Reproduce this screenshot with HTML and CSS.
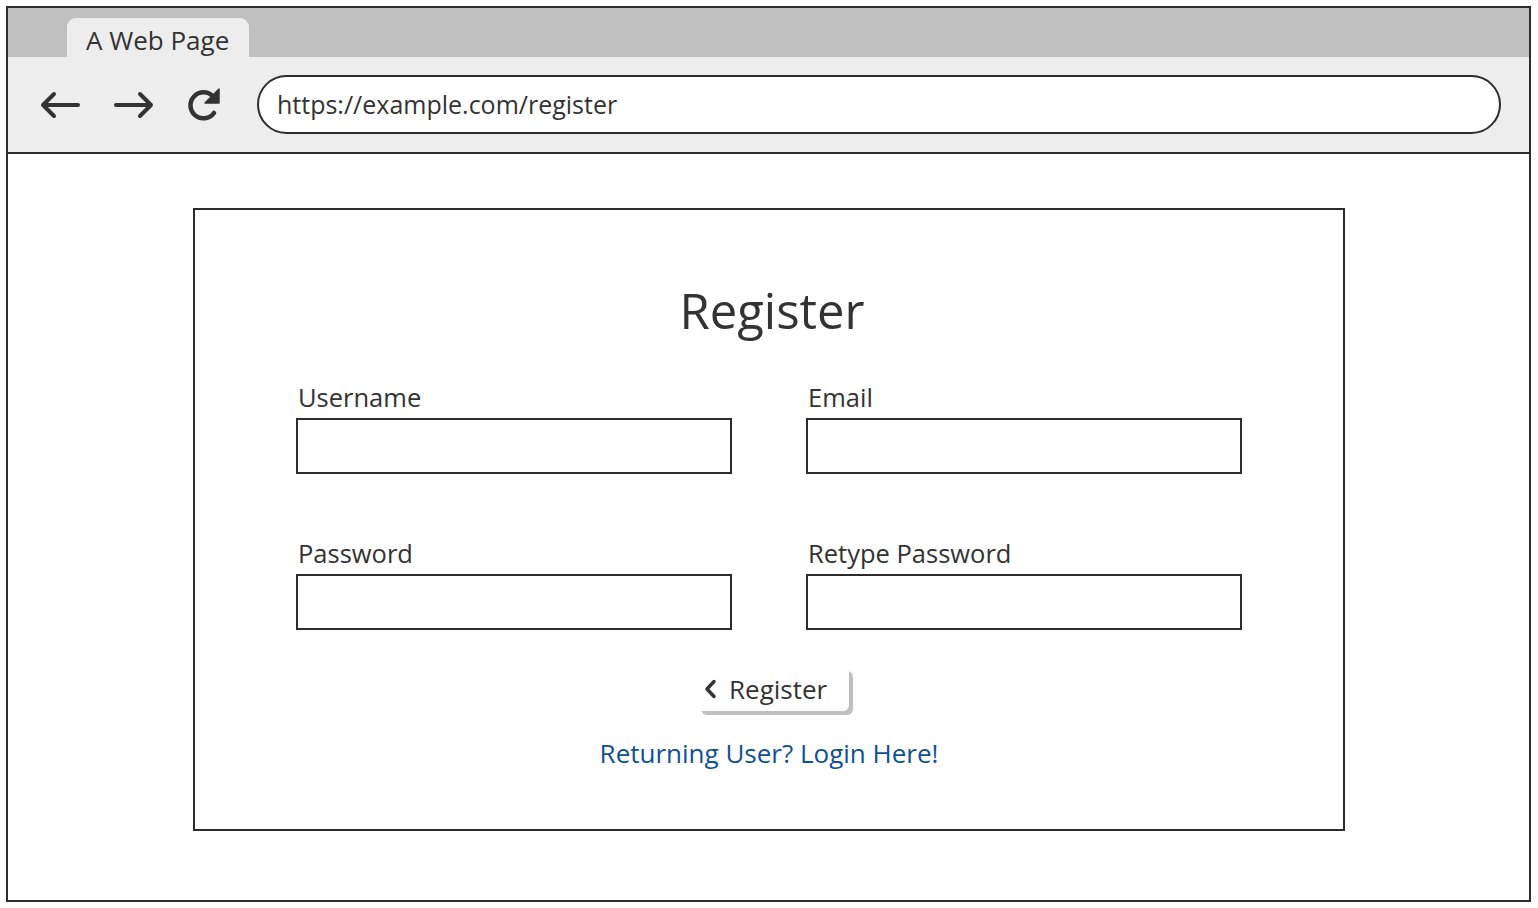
FILE: index.html
```html
<!DOCTYPE html>
<html lang="en">
<head>
<meta charset="utf-8">
<title>A Web Page</title>
<link rel="stylesheet" href="styles.css">
</head>
<body>
<div class="frame">
  <div class="tabstrip">
    <div class="tab">A Web Page</div>
  </div>
  <div class="toolbar">
    <div class="navs">
      <svg class="nav-icon" viewBox="0 0 44 30" width="44" height="30"><path d="M40 15 H5 M16 4 L5 15 L16 26" fill="none" stroke="#333" stroke-width="4" stroke-linecap="round" stroke-linejoin="round"/></svg>
      <svg class="nav-icon" viewBox="0 0 44 30" width="44" height="30"><path d="M4 15 H39 M28 4 L39 15 L28 26" fill="none" stroke="#333" stroke-width="4" stroke-linecap="round" stroke-linejoin="round"/></svg>
      <svg class="nav-icon reload" viewBox="0 0 40 40" width="40" height="40"><path d="M30 11.5 A13 13 0 1 0 31 28" fill="none" stroke="#333" stroke-width="4.5" stroke-linecap="round"/><polygon points="36,4 36,18 22,18" fill="#333" stroke="#333" stroke-width="1.5" stroke-linejoin="round"/></svg>
    </div>
    <div class="urlbar">https://example.com/register</div>
  </div>
  <div class="content">
    <div class="card">
      <h1 class="title">Register</h1>
      <div class="form-grid">
        <div class="field">
          <label class="label">Username</label>
          <div class="input"></div>
        </div>
        <div class="field">
          <label class="label">Email</label>
          <div class="input"></div>
        </div>
        <div class="field">
          <label class="label">Password</label>
          <div class="input"></div>
        </div>
        <div class="field">
          <label class="label">Retype Password</label>
          <div class="input"></div>
        </div>
      </div>
      <div class="actions">
        <div class="button">
          <svg class="chev" viewBox="0 0 14 22" width="14" height="22"><path d="M11 3.5 L4 11 L11 18.5" fill="none" stroke="#333" stroke-width="3.5" stroke-linecap="round" stroke-linejoin="round"/></svg>
          <span>Register</span>
        </div>
        <a class="link" href="#">Returning User? Login Here!</a>
      </div>
    </div>
  </div>
</div>
</body>
</html>
```

FILE: styles.css
```css
* { box-sizing: border-box; }
html, body { margin: 0; padding: 0; background: #fff; }
body {
  font-family: "Open Sans", Lato, "Liberation Sans", sans-serif;
  color: #333;
  width: 1538px;
  height: 908px;
  padding: 6px 7px 6px 6px;
}
.frame {
  width: 1525px;
  height: 896px;
  border: 2px solid #2c2c2c;
  display: flex;
  flex-direction: column;
}
.tabstrip {
  height: 49px;
  background: #c0c0c0;
  padding: 10px 0 0 59px;
  display: flex;
  align-items: flex-end;
}
.tab {
  width: 182px;
  height: 39px;
  background: #ededed;
  border-radius: 9px 9px 0 0;
  font-size: 26px;
  line-height: 30px;
  padding: 7px 0 0 19px;
  color: #333;
  white-space: nowrap;
}
.toolbar {
  height: 97px;
  background: #ededed;
  border-bottom: 2px solid #2c2c2c;
  display: flex;
  align-items: center;
  padding: 0 28px 0 30px;
}
.navs {
  display: flex;
  align-items: center;
  gap: 30px;
  width: 219px;
  flex: none;
}
.nav-icon { display: block; }
.reload { margin-left: -3px; }
.urlbar {
  flex: 1;
  height: 59px;
  border: 2px solid #2c2c2c;
  border-radius: 30px;
  background: #fff;
  font-size: 25px;
  line-height: 30px;
  padding: 12px 0 0 18px;
  margin-top: -1px;
}
.content {
  flex: 1;
  padding: 54px 184px 68px 185px;
}
.card {
  border: 2px solid #2c2c2c;
  height: 623px;
  display: flex;
  flex-direction: column;
  align-items: center;
  padding-top: 70px;
}
.title {
  margin: 0 0 0 6px;
  font-size: 49px;
  line-height: 60px;
  font-weight: 400;
  color: #333;
}
.form-grid {
  margin-top: 42px;
  display: grid;
  grid-template-columns: 436px 436px;
  column-gap: 74px;
  row-gap: 64px;
}
.field { display: flex; flex-direction: column; }
.label {
  font-size: 25.5px;
  line-height: 30px;
  padding-left: 2px;
  margin-bottom: 6px;
}
.input {
  height: 56px;
  border: 2px solid #2c2c2c;
  background: #fff;
}
.actions {
  margin-top: 37px;
  display: flex;
  flex-direction: column;
  align-items: center;
}
.button {
  width: 152px;
  height: 44px;
  background: #fff;
  border-radius: 6px;
  box-shadow: 4px 4px 0 #c0c0c0;
  display: flex;
  align-items: center;
  padding-left: 6px;
  gap: 12px;
  font-size: 26px;
  margin-left: 8px;
  white-space: nowrap;
}
.chev { display: block; }
.link {
  margin-top: 27px;
  font-size: 26px;
  line-height: 30px;
  color: #0f5196;
  text-decoration: none;
}
```
